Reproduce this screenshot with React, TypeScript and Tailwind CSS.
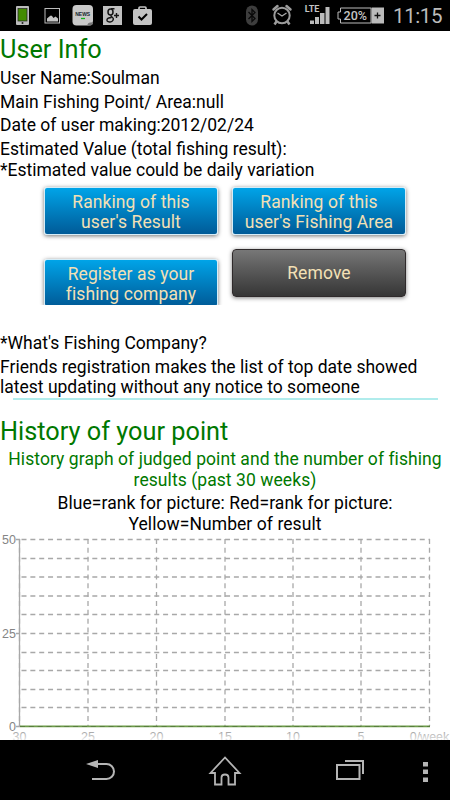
const weeks = [
  { x: 19.5, label: '30' },
  { x: 88, label: '25' },
  { x: 156.5, label: '20' },
  { x: 225, label: '15' },
  { x: 293, label: '10' },
  { x: 361, label: '5' },
  { x: 429.5, label: '0/week' },
];

const rows = [9.5, 28.5, 47, 66, 84.5, 103.5, 122.5, 140.5, 159.5, 177.5];

function StatusBar() {
  return (
    <header className="h-[31px] bg-black flex">
      <svg width="450" height="31" viewBox="0 0 450 31" fill="none">
        <rect x="16" y="6" width="13" height="19" rx="1" fill="#bcbcbc" />
        <rect x="18" y="8.5" width="9" height="12.5" fill="#438c00" stroke="#222" strokeWidth=".7" />
        <circle cx="22.5" cy="23" r="1" fill="#222" />
        <rect x="45" y="8.5" width="14.5" height="14.5" stroke="#bcbcbc" />
        <path d="M47 21.5v-3l3-2.500q1-1 2 0l1.500 2 2-1.500 2.500 2v3z" fill="#c4c4c4" />
        <rect x="72.5" y="5" width="20.5" height="20.5" rx="4" fill="#c9c9c9" />
        <path d="M93 20.5v2q0 3-3 3h-3q1-3 3-3 3 0 3-2z" fill="#777" />
        <text x="82.7" y="16.3" textAnchor="middle" fontFamily="Liberation Sans" fontWeight="bold" fontSize="5.4" textLength="15" lengthAdjust="spacingAndGlyphs" fill="#15252c">NEWS</text>
        <path d="M81 18.5h4" stroke="#13b21c" strokeWidth="1.3" />
        <rect x="103" y="6" width="19" height="19" fill="#c0c0c0" />
        <ellipse cx="110.5" cy="12" rx="2.5" ry="3" stroke="#151515" strokeWidth="1.5" />
        <path d="M111 8.7h3.5M111 15q-.5 1.3 1 2 2 1.3 1 3.3-1 2-3.5 1.7-3-.3-2.500-2.300.5-2.200 4.500-2.200" stroke="#151515" strokeWidth="1.4" />
        <path d="M114 15.5h5M116.5 13v5" stroke="#151515" strokeWidth="1.4" />
        <path d="M139 9.5V8q0-1 1-1h5q1 0 1 1v1.5" stroke="#c4c4c4" strokeWidth="1.7" />
        <rect x="133" y="9" width="19" height="16" rx="2" fill="#c4c4c4" />
        <path d="M138.5 16.5l3 3 5.5-5.5" stroke="#000" strokeWidth="2" />

        <rect x="246" y="5.5" width="12" height="20" rx="6" fill="#3d3d3d" />
        <path d="M248.5 12l6.5 6.5-3 3v-12l3 3-6.5 6.5" stroke="#090909" strokeWidth="1.3" />
        <circle cx="282" cy="15.5" r="7.7" stroke="#9d9d9d" strokeWidth="2" />
        <path d="M277.5 13l4.5 3 4.5-3" stroke="#aaa" strokeWidth="1.3" />
        <path d="M273.5 9.5l4-3.5M290.5 9.5l-4-3.5" stroke="#9d9d9d" strokeWidth="2.5" strokeLinecap="round" />
        <path d="M276.5 21.5l-2 3M287.5 21.5l2 3" stroke="#9d9d9d" strokeWidth="2.5" />
        <text x="304.8" y="12" fontFamily="Roboto" fontWeight="bold" fontSize="9.5" textLength="14.5" lengthAdjust="spacingAndGlyphs" fill="#c4c4c4">LTE</text>
        <path d="M310 20.5h4v3.5h-4zM315 17h4v7h-4zM320 13h4.500v11H320zM325.5 7h4v17h-4z" fill="#bbb" />
        <path d="M371 8h-30.500v4H338v7h2.500v4H371z" stroke="#bbb" />
        <rect x="371.5" y="7.5" width="12.5" height="16" fill="#bbb" />
        <path d="M374.5 15.5h6M377.5 12.5v6" stroke="#111" strokeWidth="1.3" />
        <text x="343.5" y="19.8" fontFamily="Roboto" fontWeight="500" fontSize="12.5" textLength="23.5" lengthAdjust="spacingAndGlyphs" fill="#c4c4c4">20%</text>
        <text x="393" y="23.3" fontFamily="Roboto" fontSize="20.5" textLength="49.5" fill="#bcbcbc">11:15</text>
      </svg>
    </header>
  );
}

function BlueButton({ lines }: { lines: string[] }) {
  return (
    <button className="w-[174px] h-12 rounded-[3px] border-[1.5px] border-[#d5edf8] bg-linear-to-b from-[#00a4e8] to-[#005b98] text-[#f3e0b5] leading-[20.5px] tracking-[0.1px] shadow-[0_1px_4px_rgba(0,0,0,0.55)] whitespace-nowrap pt-[3px]">
      {lines.map((line) => (
        <span key={line} className="block">{line}</span>
      ))}
    </button>
  );
}

function PointGraph() {
  return (
    <svg className="block -mt-1" width="450" height="210" viewBox="0 0 450 210" fontFamily="Liberation Sans" fontSize="12.5">
      <defs>
        <linearGradient id="fade" gradientUnits="userSpaceOnUse" x1="0" y1="200" x2="0" y2="210">
          <stop offset="0" stopColor="#999" />
          <stop offset="1" stopColor="#e4e4e4" />
        </linearGradient>
      </defs>
      <g stroke="#a8a8a8" strokeWidth="1.3">
        {rows.map((y) => (
          <path key={y} d={`M20 ${y}H430`} strokeDasharray="5 3.85" strokeDashoffset="-1.5" />
        ))}
        {weeks.map(({ x }) => (
          <path key={x} d={`M${x} 9V196`} strokeDasharray="5 3.85" />
        ))}
        <path d="M19.5 9V196M16 9.5h4M16 103.5h4M16 196.5h4" />
      </g>
      <path d="M20 196.3H430" stroke="#6d9b49" strokeWidth="1.8" />
      <path d="M20 196.5H430" stroke="#53763a" strokeWidth=".8" strokeDasharray="5 3.85" />
      <g fill="#858585" textAnchor="end">
        <text x="16" y="14">50</text>
        <text x="16" y="107.5">25</text>
        <text x="16" y="201">0</text>
      </g>
      <g fill="url(#fade)" textAnchor="middle">
        {weeks.map(({ x, label }) => (
          <text key={label} x={x} y="210.5">{label}</text>
        ))}
      </g>
    </svg>
  );
}

function NavBar() {
  return (
    <nav className="h-[60px] bg-black flex">
      <svg width="450" height="60" viewBox="0 0 450 60" fill="none" stroke="#b5b5b5" strokeWidth="2">
        <path d="M96 24h10.500a7.500 7.500 0 0 1 0 15H92" />
        <path d="M86 24l12-4v8z" fill="#b5b5b5" stroke="none" />
        <path d="M225 17.5L210.5 33h4.500v11.500h6.500v-7q0-3 3.500-3t3.500 3v7h6.500V33h4.500z" strokeWidth="1.8" />
        <path d="M337 25h22.500v14H337zM345 21h18v13" />
        <path d="M423 22h5v4.500h-5zM423 29.5h5V34h-5zM423 37.5h5V42h-5z" fill="#b5b5b5" stroke="none" />
      </svg>
    </nav>
  );
}

export default function App() {
  return (
    <div className="w-[450px] h-[800px] bg-white overflow-hidden flex flex-col font-['Roboto',sans-serif] text-[17.5px] leading-[20.5px] text-black">
      <StatusBar />
      <main className="h-[709px] overflow-hidden">
        <h1 className="text-[25.3px] leading-[30px] text-[#007800] pt-1">User Info</h1>
        <div className="flex flex-col gap-[3.2px] pt-[3px] whitespace-nowrap">
          <p>User Name:Soulman</p>
          <p>Main Fishing Point/ Area:null</p>
          <p>Date of user making:2012/02/24</p>
          <p>Estimated Value (total fishing result):<br />*Estimated value could be daily variation</p>
        </div>
        <div className="flex gap-3.5 pl-[44px] pt-[6.5px] h-[68.5px]">
          <BlueButton lines={['Ranking of this', "user's Result"]} />
          <BlueButton lines={['Ranking of this', "user's Fishing Area"]} />
        </div>
        <div className="flex gap-3.5 pl-[44px] h-[84px]">
          <div className="-ml-2 pl-2 -mr-2 pr-2 pt-[10px] h-[56px] overflow-hidden">
            <BlueButton lines={['Register as your', 'fishing company']} />
          </div>
          <button className="w-[174px] h-12 rounded-[4px] border-[1.5px] border-[#2f2a2b] bg-linear-to-b from-[#777] to-[#363636] text-[#f3e0b5] tracking-[0.1px] shadow-[0_1px_4px_rgba(0,0,0,0.5)] pt-0.5">Remove</button>
        </div>
        <div className="flex flex-col gap-[3.7px] whitespace-nowrap">
          <p>*What's Fishing Company?</p>
          <p>Friends registration makes the list of top date showed<br />latest updating without any notice to someone</p>
        </div>
        <hr className="mt-[0.5px] ml-[13px] w-[425px] border-0 h-0.5 bg-[#b0ecec]" />
        <h1 className="text-[25.3px] leading-[30px] text-[#007800] pt-[17px]">History of your point</h1>
        <div className="flex flex-col gap-[3.2px] pt-0.5 text-center tracking-[0.07px] whitespace-nowrap">
          <p className="text-[#007800]">History graph of judged point and the number of fishing<br />results (past 30 weeks)</p>
          <p>Blue=rank for picture: Red=rank for picture:<br />Yellow=Number of result</p>
        </div>
        <PointGraph />
      </main>
      <NavBar />
    </div>
  );
}
